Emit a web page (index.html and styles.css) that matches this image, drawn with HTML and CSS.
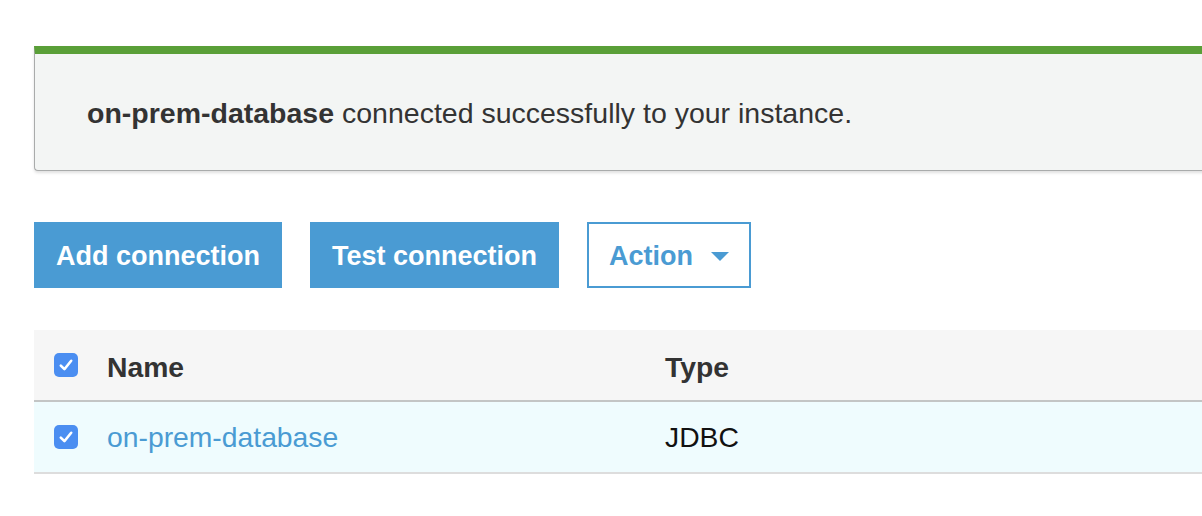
FILE: index.html
```html
<!DOCTYPE html>
<html>
<head>
<meta charset="utf-8">
<link rel="stylesheet" href="styles.css">
</head>
<body>
<div class="page">
  <div class="flash">
    <p class="flash-text"><strong>on-prem-database</strong> connected successfully to your instance.</p>
  </div>
  <div class="actions">
    <button class="btn btn-primary">Add connection</button>
    <button class="btn btn-primary">Test connection</button>
    <button class="btn btn-outline">Action <svg class="caret" width="18" height="9" viewBox="0 0 18 9"><path d="M0 0H18L9 9Z" fill="#4a9bd3"/></svg></button>
  </div>
  <div class="table">
    <div class="row head">
      <span class="cb"><svg width="24" height="24" viewBox="0 0 24 24"><rect width="24" height="24" rx="5" fill="#4b8ef1"/><path d="M6.8 12.6l3.6 3.6 6.8-8.4" fill="none" stroke="#fff" stroke-width="2.6" stroke-linecap="round" stroke-linejoin="round"/></svg></span>
      <span class="col-name">Name</span>
      <span class="col-type">Type</span>
    </div>
    <div class="row body-row">
      <span class="cb"><svg width="24" height="24" viewBox="0 0 24 24"><rect width="24" height="24" rx="5" fill="#4b8ef1"/><path d="M6.8 12.6l3.6 3.6 6.8-8.4" fill="none" stroke="#fff" stroke-width="2.6" stroke-linecap="round" stroke-linejoin="round"/></svg></span>
      <a class="col-name link">on-prem-database</a>
      <span class="col-type">JDBC</span>
    </div>
  </div>
</div>
</body>
</html>
```

FILE: styles.css
```css
html, body {
  margin: 0;
  padding: 0;
  background: #fff;
}
body {
  font-family: "Liberation Sans", Arial, Helvetica, sans-serif;
  color: #333;
  overflow: hidden;
}
.page {
  padding: 46px 0 0 34px;
}
.flash {
  margin-right: -20px;
  border-top: 8px solid #5a9f38;
  border-left: 1px solid #a9abab;
  border-bottom: 1px solid #a9abab;
  border-bottom-left-radius: 4px;
  background: #f3f5f4;
  box-shadow: 0 2px 3px rgba(0,0,0,0.12);
  height: 116px;
  display: flex;
  align-items: center;
}
.flash-text {
  margin: 0 0 0 52px;
  padding-top: 2px;
  font-size: 28.5px;
  color: #333;
  line-height: 32px;
}
.flash-text strong {
  font-weight: bold;
}
.actions {
  display: flex;
  gap: 28px;
  margin-top: 51px;
}
.btn {
  font-family: "Liberation Sans", Arial, Helvetica, sans-serif;
  font-size: 27px;
  font-weight: bold;
  height: 66px;
  border-radius: 0;
  cursor: pointer;
  display: flex;
  align-items: center;
  padding-top: 3px !important;
}
.btn-primary {
  background: #4a9bd3;
  color: #fff;
  border: none;
  padding: 0 22px;
}
.btn-outline {
  background: #fff;
  color: #4a9bd3;
  border: 2px solid #4a9bd3;
  padding: 0 20px 0 20px;
  gap: 18px;
}
.caret {
  display: block;
  margin-top: -1px;
}
.table {
  margin-top: 42px;
  margin-right: -20px;
}
.row {
  display: flex;
  align-items: center;
  height: 70px;
  font-size: 28.3px;
}
.head {
  background: #f6f6f6;
  border-bottom: 2px solid #c3c5c5;
  font-weight: bold;
  color: #333;
}
.head .col-name,
.head .col-type {
  padding-top: 4px;
}
.body-row {
  background: #effcfe;
  border-bottom: 2px solid #dddddd;
  color: #111;
}
.cb {
  width: 24px;
  height: 24px;
  margin-left: 20px;
  display: block;
}
.cb svg {
  display: block;
}
.col-name {
  margin-left: 29px;
  width: 558px;
}
.link {
  color: #4a9bd3;
  text-decoration: none;
}
.col-type {
  flex: 1;
}
```
